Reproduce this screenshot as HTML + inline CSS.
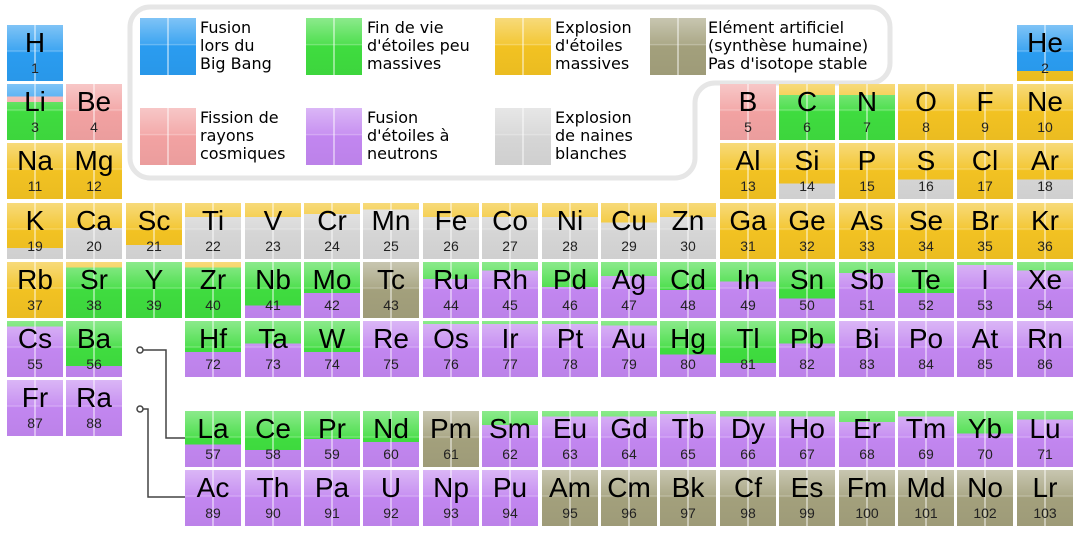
<!DOCTYPE html>
<html><head><meta charset="utf-8"><style>
body{margin:0;width:1080px;height:540px;background:#fff;position:relative;overflow:hidden;font-family:"DejaVu Sans","Liberation Sans",sans-serif}
.c{position:absolute;width:56px;height:56px;overflow:hidden;color:#000;text-align:center}
.c::after{content:"";position:absolute;inset:0;background:linear-gradient(90deg,transparent 27px,rgba(255,255,255,.45) 27px,rgba(255,255,255,.45) 29px,transparent 29px),linear-gradient(rgba(255,255,255,.4),rgba(255,255,255,.1) 45%,rgba(255,255,255,.35) 46%,rgba(255,255,255,0) 49%,rgba(0,0,0,.03))}
.c b{position:absolute;left:0;right:0;top:3px;font-weight:normal;font-size:28px;line-height:30px;z-index:1;font-family:"Liberation Sans",sans-serif}
.c i{position:absolute;left:0;right:0;top:35px;font-style:normal;font-size:14px;line-height:16px;z-index:1;color:#222;font-family:"Liberation Sans",sans-serif}
.b{background:#2a9cf0}.g{background:#3fdc3f}.y{background:#f2c222}.s{background:#d6d6d6}.p{background:#c286f0}.o{background:#a3a07c}.k{background:#f2a2a2}
.m{background:linear-gradient(var(--a) var(--h),var(--b) 0)}
.gp{--a:#3fdc3f;--b:#c286f0}.ys{--a:#f2c222;--b:#d6d6d6}.yg{--a:#f2c222;--b:#3fdc3f}.by{--a:#2a9cf0;--b:#f2c222}
.lt{position:absolute;font-size:16px;line-height:18px;color:#000}
.sw{position:absolute;width:56px;height:57px}
</style></head><body>
<svg width="1080" height="540" style="position:absolute;left:0;top:0">
<path d="M150 7 H870 A20 20 0 0 1 890 27 V63 A20 20 0 0 1 870 83 H715 A20 20 0 0 0 695 103 V158 A20 20 0 0 1 675 178 H150 A20 20 0 0 1 130 158 V27 A20 20 0 0 1 150 7 Z" fill="#fff" stroke="#e6e6e6" stroke-width="5"/>
<g fill="none" stroke="#444" stroke-width="1.5">
<circle cx="140" cy="350" r="3" fill="#fff"/><path d="M143 350 H166 V438 H185"/>
<circle cx="140" cy="409" r="3" fill="#fff"/><path d="M143 409 H148 V497 H185"/>
</g></svg>

<div class="c sw b" style="left:140px;top:18px"></div><div class="lt" style="left:200px;top:19px">Fusion<br>lors du<br>Big Bang</div>
<div class="c sw g" style="left:306px;top:18px"></div><div class="lt" style="left:367px;top:19px">Fin de vie<br>d'étoiles peu<br>massives</div>
<div class="c sw y" style="left:495px;top:18px"></div><div class="lt" style="left:555px;top:19px">Explosion<br>d'étoiles<br>massives</div>
<div class="c sw o" style="left:650px;top:18px"></div><div class="lt" style="left:708px;top:19px">Elément artificiel<br>(synthèse humaine)<br>Pas d'isotope stable</div>
<div class="c sw k" style="left:140px;top:108px"></div><div class="lt" style="left:200px;top:109px">Fission de<br>rayons<br>cosmiques</div>
<div class="c sw p" style="left:306px;top:108px"></div><div class="lt" style="left:367px;top:109px">Fusion<br>d'étoiles à<br>neutrons</div>
<div class="c sw s" style="left:495px;top:108px"></div><div class="lt" style="left:555px;top:109px">Explosion<br>de naines<br>blanches</div>

<div class="c b" style="left:7px;top:25px"><b>H</b><i>1</i></div>
<div class="c m by" style="--h:82%;left:1017px;top:25px"><b>He</b><i>2</i></div>

<div class="c" style="left:7px;top:84px;background:linear-gradient(#2a9cf0 22%,#f2a2a2 22%,#f2a2a2 32%,#3fdc3f 32%)"><b>Li</b><i>3</i></div>
<div class="c k" style="left:66px;top:84px"><b>Be</b><i>4</i></div>
<div class="c k" style="left:720px;top:84px"><b>B</b><i>5</i></div>
<div class="c m yg" style="--h:20%;left:779px;top:84px"><b>C</b><i>6</i></div>
<div class="c m yg" style="--h:20%;left:839px;top:84px"><b>N</b><i>7</i></div>
<div class="c y" style="left:898px;top:84px"><b>O</b><i>8</i></div>
<div class="c y" style="left:957px;top:84px"><b>F</b><i>9</i></div>
<div class="c y" style="left:1017px;top:84px"><b>Ne</b><i>10</i></div>

<div class="c y" style="left:7px;top:143px"><b>Na</b><i>11</i></div>
<div class="c y" style="left:66px;top:143px"><b>Mg</b><i>12</i></div>
<div class="c y" style="left:720px;top:143px"><b>Al</b><i>13</i></div>
<div class="c m ys" style="--h:72%;left:779px;top:143px"><b>Si</b><i>14</i></div>
<div class="c y" style="left:839px;top:143px"><b>P</b><i>15</i></div>
<div class="c m ys" style="--h:65%;left:898px;top:143px"><b>S</b><i>16</i></div>
<div class="c y" style="left:957px;top:143px"><b>Cl</b><i>17</i></div>
<div class="c m ys" style="--h:65%;left:1017px;top:143px"><b>Ar</b><i>18</i></div>

<div class="c m ys" style="--h:80%;left:7px;top:203px"><b>K</b><i>19</i></div>
<div class="c m ys" style="--h:45%;left:66px;top:203px"><b>Ca</b><i>20</i></div>
<div class="c m ys" style="--h:75%;left:126px;top:203px"><b>Sc</b><i>21</i></div>
<div class="c m ys" style="--h:25%;left:185px;top:203px"><b>Ti</b><i>22</i></div>
<div class="c m ys" style="--h:25%;left:245px;top:203px"><b>V</b><i>23</i></div>
<div class="c m ys" style="--h:20%;left:304px;top:203px"><b>Cr</b><i>24</i></div>
<div class="c m ys" style="--h:12%;left:363px;top:203px"><b>Mn</b><i>25</i></div>
<div class="c m ys" style="--h:25%;left:423px;top:203px"><b>Fe</b><i>26</i></div>
<div class="c m ys" style="--h:25%;left:482px;top:203px"><b>Co</b><i>27</i></div>
<div class="c m ys" style="--h:25%;left:542px;top:203px"><b>Ni</b><i>28</i></div>
<div class="c m ys" style="--h:35%;left:601px;top:203px"><b>Cu</b><i>29</i></div>
<div class="c m ys" style="--h:25%;left:660px;top:203px"><b>Zn</b><i>30</i></div>
<div class="c y" style="left:720px;top:203px"><b>Ga</b><i>31</i></div>
<div class="c y" style="left:779px;top:203px"><b>Ge</b><i>32</i></div>
<div class="c y" style="left:839px;top:203px"><b>As</b><i>33</i></div>
<div class="c y" style="left:898px;top:203px"><b>Se</b><i>34</i></div>
<div class="c y" style="left:957px;top:203px"><b>Br</b><i>35</i></div>
<div class="c y" style="left:1017px;top:203px"><b>Kr</b><i>36</i></div>

<div class="c y" style="left:7px;top:262px"><b>Rb</b><i>37</i></div>
<div class="c m yg" style="--h:10%;left:66px;top:262px"><b>Sr</b><i>38</i></div>
<div class="c g" style="left:126px;top:262px"><b>Y</b><i>39</i></div>
<div class="c m yg" style="--h:10%;left:185px;top:262px"><b>Zr</b><i>40</i></div>
<div class="c m gp" style="--h:78%;left:245px;top:262px"><b>Nb</b><i>41</i></div>
<div class="c m gp" style="--h:55%;left:304px;top:262px"><b>Mo</b><i>42</i></div>
<div class="c o" style="left:363px;top:262px"><b>Tc</b><i>43</i></div>
<div class="c m gp" style="--h:30%;left:423px;top:262px"><b>Ru</b><i>44</i></div>
<div class="c m gp" style="--h:15%;left:482px;top:262px"><b>Rh</b><i>45</i></div>
<div class="c m gp" style="--h:45%;left:542px;top:262px"><b>Pd</b><i>46</i></div>
<div class="c m gp" style="--h:25%;left:601px;top:262px"><b>Ag</b><i>47</i></div>
<div class="c m gp" style="--h:50%;left:660px;top:262px"><b>Cd</b><i>48</i></div>
<div class="c m gp" style="--h:35%;left:720px;top:262px"><b>In</b><i>49</i></div>
<div class="c m gp" style="--h:65%;left:779px;top:262px"><b>Sn</b><i>50</i></div>
<div class="c m gp" style="--h:20%;left:839px;top:262px"><b>Sb</b><i>51</i></div>
<div class="c m gp" style="--h:55%;left:898px;top:262px"><b>Te</b><i>52</i></div>
<div class="c m gp" style="--h:5%;left:957px;top:262px"><b>I</b><i>53</i></div>
<div class="c m gp" style="--h:15%;left:1017px;top:262px"><b>Xe</b><i>54</i></div>

<div class="c m gp" style="--h:10%;left:7px;top:321px"><b>Cs</b><i>55</i></div>
<div class="c m gp" style="--h:80%;left:66px;top:321px"><b>Ba</b><i>56</i></div>
<div class="c m gp" style="--h:55%;left:185px;top:321px"><b>Hf</b><i>72</i></div>
<div class="c m gp" style="--h:40%;left:245px;top:321px"><b>Ta</b><i>73</i></div>
<div class="c m gp" style="--h:55%;left:304px;top:321px"><b>W</b><i>74</i></div>
<div class="c p" style="left:363px;top:321px"><b>Re</b><i>75</i></div>
<div class="c m gp" style="--h:5%;left:423px;top:321px"><b>Os</b><i>76</i></div>
<div class="c m gp" style="--h:5%;left:482px;top:321px"><b>Ir</b><i>77</i></div>
<div class="c m gp" style="--h:5%;left:542px;top:321px"><b>Pt</b><i>78</i></div>
<div class="c m gp" style="--h:8%;left:601px;top:321px"><b>Au</b><i>79</i></div>
<div class="c m gp" style="--h:60%;left:660px;top:321px"><b>Hg</b><i>80</i></div>
<div class="c m gp" style="--h:75%;left:720px;top:321px"><b>Tl</b><i>81</i></div>
<div class="c m gp" style="--h:40%;left:779px;top:321px"><b>Pb</b><i>82</i></div>
<div class="c p" style="left:839px;top:321px"><b>Bi</b><i>83</i></div>
<div class="c p" style="left:898px;top:321px"><b>Po</b><i>84</i></div>
<div class="c p" style="left:957px;top:321px"><b>At</b><i>85</i></div>
<div class="c p" style="left:1017px;top:321px"><b>Rn</b><i>86</i></div>

<div class="c p" style="left:7px;top:380px"><b>Fr</b><i>87</i></div>
<div class="c p" style="left:66px;top:380px"><b>Ra</b><i>88</i></div>

<div class="c m gp" style="--h:60%;left:185px;top:411px"><b>La</b><i>57</i></div>
<div class="c m gp" style="--h:70%;left:245px;top:411px"><b>Ce</b><i>58</i></div>
<div class="c m gp" style="--h:50%;left:304px;top:411px"><b>Pr</b><i>59</i></div>
<div class="c m gp" style="--h:55%;left:363px;top:411px"><b>Nd</b><i>60</i></div>
<div class="c o" style="left:423px;top:411px"><b>Pm</b><i>61</i></div>
<div class="c m gp" style="--h:25%;left:482px;top:411px"><b>Sm</b><i>62</i></div>
<div class="c m gp" style="--h:10%;left:542px;top:411px"><b>Eu</b><i>63</i></div>
<div class="c m gp" style="--h:10%;left:601px;top:411px"><b>Gd</b><i>64</i></div>
<div class="c m gp" style="--h:5%;left:660px;top:411px"><b>Tb</b><i>65</i></div>
<div class="c m gp" style="--h:10%;left:720px;top:411px"><b>Dy</b><i>66</i></div>
<div class="c m gp" style="--h:10%;left:779px;top:411px"><b>Ho</b><i>67</i></div>
<div class="c m gp" style="--h:20%;left:839px;top:411px"><b>Er</b><i>68</i></div>
<div class="c m gp" style="--h:10%;left:898px;top:411px"><b>Tm</b><i>69</i></div>
<div class="c m gp" style="--h:40%;left:957px;top:411px"><b>Yb</b><i>70</i></div>
<div class="c m gp" style="--h:15%;left:1017px;top:411px"><b>Lu</b><i>71</i></div>

<div class="c p" style="left:185px;top:470px"><b>Ac</b><i>89</i></div>
<div class="c p" style="left:245px;top:470px"><b>Th</b><i>90</i></div>
<div class="c p" style="left:304px;top:470px"><b>Pa</b><i>91</i></div>
<div class="c p" style="left:363px;top:470px"><b>U</b><i>92</i></div>
<div class="c p" style="left:423px;top:470px"><b>Np</b><i>93</i></div>
<div class="c p" style="left:482px;top:470px"><b>Pu</b><i>94</i></div>
<div class="c o" style="left:542px;top:470px"><b>Am</b><i>95</i></div>
<div class="c o" style="left:601px;top:470px"><b>Cm</b><i>96</i></div>
<div class="c o" style="left:660px;top:470px"><b>Bk</b><i>97</i></div>
<div class="c o" style="left:720px;top:470px"><b>Cf</b><i>98</i></div>
<div class="c o" style="left:779px;top:470px"><b>Es</b><i>99</i></div>
<div class="c o" style="left:839px;top:470px"><b>Fm</b><i>100</i></div>
<div class="c o" style="left:898px;top:470px"><b>Md</b><i>101</i></div>
<div class="c o" style="left:957px;top:470px"><b>No</b><i>102</i></div>
<div class="c o" style="left:1017px;top:470px"><b>Lr</b><i>103</i></div>
</body></html>
